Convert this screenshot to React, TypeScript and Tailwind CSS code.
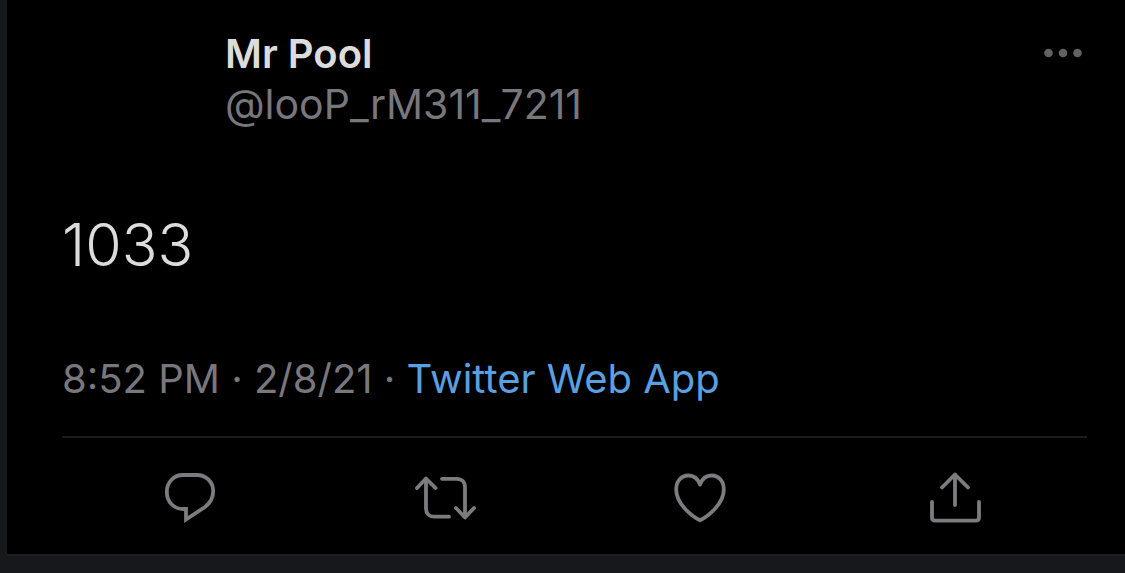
import type { ReactNode } from "react";

interface ActionButtonProps {
  label: string;
  width?: number;
  children: ReactNode;
}

function ActionButton({ label, width = 52, children }: ActionButtonProps) {
  return (
    <button type="button" aria-label={label} className="cursor-pointer">
      <svg
        className="overflow-visible"
        width={width}
        height={52}
        viewBox={`0 0 ${width} 52`}
        fill="none"
        stroke="currentColor"
        strokeWidth={3.8}
        strokeLinecap="round"
        strokeLinejoin="round"
        aria-hidden="true"
      >
        {children}
      </svg>
    </button>
  );
}

function TweetHeader() {
  return (
    <header className="flex items-start justify-between pl-[163px]">
      <div className="leading-[50px]">
        <h1 className="text-[40px] font-semibold text-[#dcdcdc]">Mr Pool</h1>
        <p className="text-[41px] text-[#77777c]">@looP_rM311_7211</p>
      </div>
      <button
        type="button"
        aria-label="More"
        className="mt-4 mr-1 cursor-pointer text-[#626265]"
      >
        <svg
          width={40}
          height={16}
          viewBox="0 0 40 16"
          fill="currentColor"
          aria-hidden="true"
        >
          <circle cx="5.5" cy="8" r="4.3" />
          <circle cx="20" cy="8" r="4.3" />
          <circle cx="34.5" cy="8" r="4.3" />
        </svg>
      </button>
    </header>
  );
}

function TweetActions() {
  return (
    <div className="grid grid-cols-4 justify-items-center pt-[34px] pr-1 text-[#7c7c80]">
      <ActionButton label="Reply">
        <path
          strokeLinejoin="miter"
          d="M19 3h14c9 0 16.2 7 16.2 16 0 7-3 12-8.2 16L22 47.5V37h-3C10 37 2.8 30 2.8 20S10 3 19 3z"
        />
      </ActionButton>
      <ActionButton label="Retweet" width={60}>
        <path d="M2 16l9-9.500 9.500 9.500M11 7v29.500c0 5 3.200 8.200 8 8.200h15" />
        <path d="M27 6.800h15c5 0 8 3.200 8 8.200v30M41 36l9 9.500 9-9.500" />
      </ActionButton>
      <ActionButton label="Like">
        <path d="M26 12.500C24 7 19.800 3.500 14.500 3.500 7 3.500 2.200 9.500 2.200 17.500c0 14 15 26.500 23.800 30.800 8.800-4.300 23.800-16.800 23.800-30.800 0-8-4.800-14-12.300-14C32.200 3.500 28 7 26 12.500z" />
      </ActionButton>
      <ActionButton label="Share">
        <path d="M26 33V2.500M13 15.500l13-13 13 13" />
        <path d="M3 30v15.500c0 2 1.200 3.200 3.200 3.200h40.600c2 0 3.200-1.200 3.200-3.200V30" />
      </ActionButton>
    </div>
  );
}

export default function App() {
  return (
    <div className="min-h-screen bg-[#17181c] pl-[7px] font-['Inter','Liberation_Sans',sans-serif]">
      <article className="border-b-2 border-[#1e1e23] bg-black pt-[29px] pr-[38px] pb-[30px] pl-[55px]">
        <TweetHeader />
        <p className="pt-20 text-[59px] leading-[72px] font-light text-[#dcdcdc]">
          1033
        </p>
        <p className="border-b-2 border-[#1c1c1d] pt-[73px] pb-8 text-[40px] leading-[50px] text-[#77777c]">
          8:52 PM · 2/8/21 ·{" "}
          <a href="#source" className="text-[#5a9fe0]">
            Twitter Web App
          </a>
        </p>
        <TweetActions />
      </article>
    </div>
  );
}
